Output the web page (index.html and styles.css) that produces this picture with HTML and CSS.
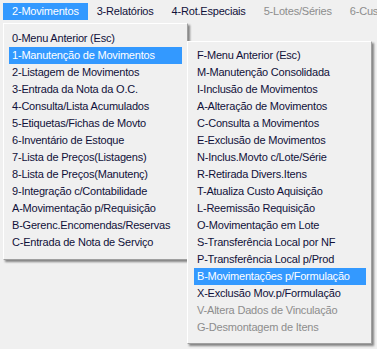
FILE: index.html
```html
<!DOCTYPE html>
<html lang="pt-BR">
<head>
  <meta charset="UTF-8">
  <title>Movimentos</title>
  <link rel="stylesheet" href="styles.css">
</head>
<body>
  <!-- Barra de menu principal -->
  <div class="menubar">
    <div class="bar-item active">2-Movimentos</div>
    <div class="bar-item">3-Relatórios</div>
    <div class="bar-item">4-Rot.Especiais</div>
    <div class="bar-item disabled">5-Lotes/Séries</div>
    <div class="bar-item disabled">6-Custos</div>
  </div>

  <!-- Menu Movimentos -->
  <div class="popup popup-main">
    <div class="item">0-Menu Anterior (Esc)</div>
    <div class="item selected">1-Manutenção de Movimentos</div>
    <div class="item">2-Listagem de Movimentos</div>
    <div class="item">3-Entrada da Nota da O.C.</div>
    <div class="item">4-Consulta/Lista Acumulados</div>
    <div class="item">5-Etiquetas/Fichas de Movto</div>
    <div class="item">6-Inventário de Estoque</div>
    <div class="item">7-Lista de Preços(Listagens)</div>
    <div class="item">8-Lista de Preços(Manutenç)</div>
    <div class="item">9-Integração c/Contabilidade</div>
    <div class="item">A-Movimentação p/Requisição</div>
    <div class="item">B-Gerenc.Encomendas/Reservas</div>
    <div class="item">C-Entrada de Nota de Serviço</div>
  </div>

  <!-- Submenu Manutenção -->
  <div class="popup popup-sub">
    <div class="item">F-Menu Anterior (Esc)</div>
    <div class="item">M-Manutenção Consolidada</div>
    <div class="item">I-Inclusão de Movimentos</div>
    <div class="item">A-Alteração de Movimentos</div>
    <div class="item">C-Consulta a Movimentos</div>
    <div class="item">E-Exclusão de Movimentos</div>
    <div class="item">N-Inclus.Movto c/Lote/Série</div>
    <div class="item">R-Retirada Divers.Itens</div>
    <div class="item">T-Atualiza Custo Aquisição</div>
    <div class="item">L-Reemissão Requisição</div>
    <div class="item">O-Movimentação em Lote</div>
    <div class="item">S-Transferência Local por NF</div>
    <div class="item">P-Transferência Local p/Prod</div>
    <div class="item selected">B-Movimentações p/Formulação</div>
    <div class="item">X-Exclusão Mov.p/Formulação</div>
    <div class="item disabled">V-Altera Dados de Vinculação</div>
    <div class="item disabled">G-Desmontagem de Itens</div>
  </div>
</body>
</html>
```

FILE: styles.css
```css
* {
  margin: 0;
  padding: 0;
  box-sizing: border-box;
}

body {
  font-family: "Liberation Sans", Arial, sans-serif;
  font-size: 11px;
  letter-spacing: -0.2px;
  background-color: #f0f0f0;
  color: #10103a;
  width: 377px;
  height: 349px;
  overflow: hidden;
  position: relative;
}

/* Barra de menu */
.menubar {
  display: flex;
  height: 23px;
  padding: 3px 0 0 3px;
  background-color: #f0f0f0;
  white-space: nowrap;
  overflow: hidden;
}

.bar-item {
  height: 17px;
  line-height: 17px;
  padding: 0 9px;
  flex-shrink: 0;
}

.bar-item.active {
  background-color: #3399ff;
  color: #fff;
}

.bar-item.disabled {
  color: #8d8d8d;
}

/* Menus suspensos */
.popup {
  position: absolute;
  background-color: #f0f0f0;
  border-top: 1px solid #fff;
  border-left: 1px solid #fff;
  border-right: 1px solid #a0a0a0;
  border-bottom: 1px solid #a0a0a0;
  box-shadow: 2px 2px 2px rgba(0, 0, 0, 0.45);
  white-space: nowrap;
}

.popup-main {
  left: 3px;
  top: 23px;
  width: 185px;
  height: 237px;
  padding: 6px 5px 0 5px;
}

.popup-sub {
  left: 187px;
  top: 41px;
  width: 185px;
  height: 303px;
  padding: 5px 5px 0 6px;
}

.item {
  height: 17px;
  line-height: 17px;
  padding-left: 3px;
}

.item.selected {
  background-color: #3399ff;
  color: #fff;
}

.item.disabled {
  color: #8d8d8d;
}
```
